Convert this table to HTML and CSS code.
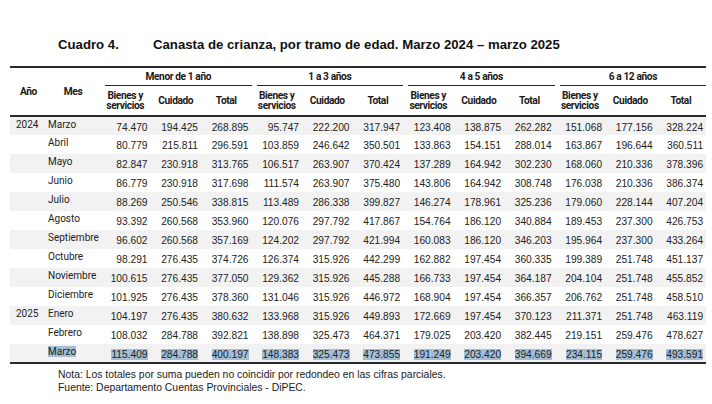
FILE: index.html
```html
<!DOCTYPE html>
<html lang="es">
<head>
    <meta charset="UTF-8">
    <meta name="viewport" content="width=device-width, initial-scale=1.0">
    <title>Cuadro 4 - Canasta de crianza</title>
    <link rel="stylesheet" href="styles.css">
</head>
<body id="page">
    <div class="title">
        <span class="title-num">Cuadro 4.</span>
        <span class="title-text">Canasta de crianza, por tramo de edad. Marzo 2024 &ndash; marzo 2025</span>
    </div>

    <table class="cuadro">
        <colgroup>
            <col class="c-year">
            <col class="c-month">
            <col span="12" class="c-num">
        </colgroup>
        <thead>
            <tr class="head-groups">
                <th rowspan="2" class="h-side">Año</th>
                <th rowspan="2" class="h-side">Mes</th>
                <th colspan="3" class="h-group"><div>Menor de 1 año</div></th>
                <th colspan="3" class="h-group"><div>1 a 3 años</div></th>
                <th colspan="3" class="h-group"><div>4 a 5 años</div></th>
                <th colspan="3" class="h-group"><div>6 a 12 años</div></th>
            </tr>
            <tr class="head-sub">
                <th>Bienes y<br>servicios</th><th>Cuidado</th><th>Total</th>
                <th>Bienes y<br>servicios</th><th>Cuidado</th><th>Total</th>
                <th>Bienes y<br>servicios</th><th>Cuidado</th><th>Total</th>
                <th>Bienes y<br>servicios</th><th>Cuidado</th><th>Total</th>
            </tr>
        </thead>
        <tbody id="rows">
        </tbody>
    </table>

    <div class="notes">
        <p>Nota: Los totales por suma pueden no coincidir por redondeo en las cifras parciales.</p>
        <p>Fuente: Departamento Cuentas Provinciales - DiPEC.</p>
    </div>

    <script>
        const data = [
            ['2024', 'Marzo', '74.470 194.425 268.895 95.747 222.200 317.947 123.408 138.875 262.282 151.068 177.156 328.224'],
            ['', 'Abril', '80.779 215.811 296.591 103.859 246.642 350.501 133.863 154.151 288.014 163.867 196.644 360.511'],
            ['', 'Mayo', '82.847 230.918 313.765 106.517 263.907 370.424 137.289 164.942 302.230 168.060 210.336 378.396'],
            ['', 'Junio', '86.779 230.918 317.698 111.574 263.907 375.480 143.806 164.942 308.748 176.038 210.336 386.374'],
            ['', 'Julio', '88.269 250.546 338.815 113.489 286.338 399.827 146.274 178.961 325.236 179.060 228.144 407.204'],
            ['', 'Agosto', '93.392 260.568 353.960 120.076 297.792 417.867 154.764 186.120 340.884 189.453 237.300 426.753'],
            ['', 'Septiembre', '96.602 260.568 357.169 124.202 297.792 421.994 160.083 186.120 346.203 195.964 237.300 433.264'],
            ['', 'Octubre', '98.291 276.435 374.726 126.374 315.926 442.299 162.882 197.454 360.335 199.389 251.748 451.137'],
            ['', 'Noviembre', '100.615 276.435 377.050 129.362 315.926 445.288 166.733 197.454 364.187 204.104 251.748 455.852'],
            ['', 'Diciembre', '101.925 276.435 378.360 131.046 315.926 446.972 168.904 197.454 366.357 206.762 251.748 458.510'],
            ['2025', 'Enero', '104.197 276.435 380.632 133.968 315.926 449.893 172.669 197.454 370.123 211.371 251.748 463.119'],
            ['', 'Febrero', '108.032 284.788 392.821 138.898 325.473 464.371 179.025 203.420 382.445 219.151 259.476 478.627'],
            ['', 'Marzo', '115.409 284.788 400.197 148.383 325.473 473.855 191.249 203.420 394.669 234.115 259.476 493.591']
        ];

        const tbody = document.getElementById('rows');

        data.forEach((row, i) => {
            const last = i === data.length - 1; // last row shows a text selection
            const wrap = txt => last ? `<span class="sel">${txt}</span>` : txt;
            const tr = document.createElement('tr');
            let html = `<td class="year">${row[0]}</td><td class="month">${wrap(row[1])}</td>`;
            row[2].split(' ').forEach(v => {
                html += `<td class="num">${wrap(v)}</td>`;
            });
            tr.innerHTML = html;
            tbody.appendChild(tr);
        });
    </script>
</body>
</html>
```

FILE: styles.css
```css
#page {
    margin: 0;
    background: #ffffff;
    color: #1a1a1a;
}

.title {
    display: flex;
    padding: 37px 0 0 58px;
    font-family: "Liberation Sans", Arial, sans-serif;
    font-weight: bold;
    font-size: 13.2px;
    line-height: 16px;
    color: #111;
}
.title-num {
    width: 95px;
}

.cuadro {
    margin: 13px 0 0 10px;
    width: 696px;
    border-collapse: collapse;
    table-layout: fixed;
}
.c-year { width: 36px; }
.c-month { width: 54px; }
.c-num { width: 50.5px; }

.cuadro thead {
    font-family: Roboto, "Liberation Sans", sans-serif;
    font-size: 10.2px;
    letter-spacing: -0.4px;
    color: #1a1a1a;
}
.cuadro th {
    font-weight: bold;
    padding: 0;
}
.head-groups th {
    border-top: 2px solid #2a2a2a;
    height: 17px;
}
.h-side {
    text-align: center;
    vertical-align: middle;
    border-bottom: 2px solid #2a2a2a;
}
.cuadro th.h-side:first-child {
    text-align: left;
    padding-left: 10px;
}
.h-group {
    padding: 0 0 0 5px !important;
}
.h-group div {
    border-bottom: 1.5px solid #2a2a2a;
    line-height: 17px;
}
.head-sub th {
    height: 29px;
    line-height: 9.5px;
    border-bottom: 2px solid #2a2a2a;
    vertical-align: middle;
}

.cuadro tbody tr {
    height: 19px;
}
.cuadro tbody tr:nth-child(odd) {
    background: #f2f2f2;
}
.cuadro tbody tr:last-child {
    border-bottom: 2px solid #2a2a2a;
}
.cuadro td {
    padding: 0;
    vertical-align: top;
    line-height: 12px;
}
.year, .month {
    font-family: Roboto, "Liberation Sans", sans-serif;
    font-size: 10px;
    padding-top: 2px !important;
    color: #222;
}
.year {
    padding-left: 6px !important;
}
.month {
    padding-left: 2px !important;
}
.num {
    font-family: "Liberation Sans", Arial, sans-serif;
    font-size: 10.2px;
    text-align: right;
    padding: 5px 3px 0 0 !important;
    color: #222;
}
.sel {
    background: #a3bed6;
}

.notes {
    padding: 4px 0 0 58px;
    font-family: "Liberation Sans", Arial, sans-serif;
    font-size: 10.4px;
    line-height: 13px;
    color: #1a1a1a;
}
.notes p {
    margin: 0;
}
```
